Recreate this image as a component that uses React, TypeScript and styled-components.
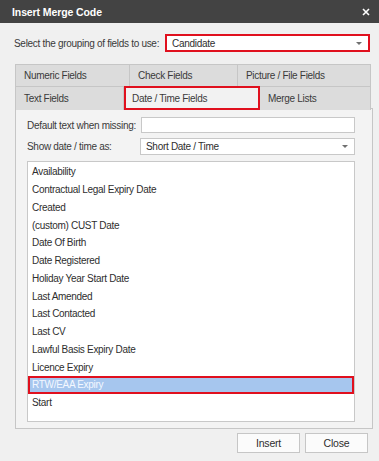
import React from 'react';
import styled, { createGlobalStyle } from 'styled-components';

const GlobalStyle = createGlobalStyle`
  html, body {
    margin: 0;
    padding: 0;
    background: #f0f0f0;
  }
`;

const Dialog = styled.div`
  width: 379px;
  height: 461px;
  background: #f0f0f0;
  display: flex;
  flex-direction: column;
  font-family: 'Liberation Sans', Arial, sans-serif;
  font-size: 10px;
  letter-spacing: -0.3px;
  color: #3a3a3a;
  box-sizing: border-box;
`;

const TitleBar = styled.div`
  height: 23px;
  background: #434343;
  display: flex;
  align-items: center;
  justify-content: space-between;
  padding: 0 9px 0 12px;
  flex-shrink: 0;
`;

const Title = styled.span`
  color: #ffffff;
  font-weight: 700;
  font-size: 10.5px;
  letter-spacing: -0.1px;
`;

const CloseIcon = styled.svg`
  width: 8px;
  height: 8px;
`;

const Body = styled.div`
  display: flex;
  flex-direction: column;
  padding: 11px 8px 0 14px;
`;

const Row = styled.div<{ $gap?: number }>`
  display: flex;
  align-items: center;
  gap: ${p => p.$gap ?? 8}px;
`;

const Label = styled.span<{ $width?: number }>`
  white-space: nowrap;
  ${p => (p.$width ? `width: ${p.$width}px; flex-shrink: 0;` : '')}
`;

const SelectBox = styled.div<{ $highlight?: boolean; $width: number }>`
  width: ${p => p.$width}px;
  height: ${p => (p.$highlight ? 18 : 17)}px;
  box-sizing: border-box;
  background: #ffffff;
  border: ${p => (p.$highlight ? '2px solid #e0101e' : '1px solid #c8c8c8')};
  display: flex;
  align-items: center;
  justify-content: space-between;
  padding: 0 6px 0 5px;
  color: #2e2e2e;
`;

const Caret = styled.span`
  width: 0;
  height: 0;
  border-left: 3px solid transparent;
  border-right: 3px solid transparent;
  border-top: 3px solid #707070;
`;

const TabArea = styled.div`
  margin-top: 12px;
  margin-left: 1px;
  display: flex;
  flex-direction: column;
`;

const TabRow = styled.div<{ $cols: string }>`
  display: grid;
  grid-template-columns: ${p => p.$cols};
  width: 356px;
  height: 22px;
`;

const Tab = styled.div<{ $active?: boolean }>`
  box-sizing: border-box;
  background: ${p => (p.$active ? '#f2f2f2' : '#dcdcdc')};
  border: 1px solid #c6c6c6;
  border-left-width: 0;
  border-bottom-width: 0;
  display: flex;
  align-items: center;
  padding-left: 8px;
  color: #3a3a3a;
  position: relative;
  &:first-child {
    border-left-width: 1px;
  }
  ${p =>
    p.$active
      ? `
    outline: 2px solid #e0101e;
    outline-offset: -2px;
    height: 24px;
    z-index: 1;
  `
      : ''}
`;

const Panel = styled.div`
  width: 358px;
  height: 321px;
  box-sizing: border-box;
  border: 1px solid #c6c6c6;
  background: #f3f3f3;
  display: flex;
  flex-direction: column;
  padding: 8px 17px 0 11px;
  gap: 5px;
`;

const TextInput = styled.div`
  width: 215px;
  height: 16px;
  box-sizing: border-box;
  background: #ffffff;
  border: 1px solid #c8c8c8;
`;

const List = styled.div`
  margin-top: 1px;
  height: 261px;
  box-sizing: border-box;
  background: #ffffff;
  border: 1px solid #c8c8c8;
  padding-top: 1px;
  display: flex;
  flex-direction: column;
`;

const Item = styled.div<{ $selected?: boolean }>`
  height: 17.75px;
  flex-shrink: 0;
  box-sizing: border-box;
  display: flex;
  align-items: center;
  color: ${p => (p.$selected ? '#f4f8ff' : '#2e2e2e')};
  background: ${p => (p.$selected ? '#a6c6ee' : 'transparent')};
  border: ${p => (p.$selected ? '2px solid #e0101e' : 'none')};
  padding-left: ${p => (p.$selected ? 2 : 4)}px;
`;

const Footer = styled.div`
  display: flex;
  justify-content: flex-end;
  gap: 5px;
  padding: 4px 11px 0 0;
`;

const Button = styled.button`
  width: 63px;
  height: 20px;
  box-sizing: border-box;
  background: #fbfbfb;
  border: 1px solid #c6c6c6;
  font-family: inherit;
  font-size: 10.5px;
  letter-spacing: -0.2px;
  color: #2e2e2e;
  padding: 0;
`;

const items = [
  'Availability',
  'Contractual Legal Expiry Date',
  'Created',
  '(custom) CUST Date',
  'Date Of Birth',
  'Date Registered',
  'Holiday Year Start Date',
  'Last Amended',
  'Last Contacted',
  'Last CV',
  'Lawful Basis Expiry Date',
  'Licence Expiry',
  'RTW/EAA Expiry',
  'Start',
];

export default function App() {
  return (
    <>
      <GlobalStyle />
      <Dialog>
        <TitleBar>
          <Title>Insert Merge Code</Title>
          <CloseIcon viewBox="0 0 8 8">
            <path d="M1 1L7 7M7 1L1 7" stroke="#ffffff" strokeWidth="1.6" />
          </CloseIcon>
        </TitleBar>
        <Body>
          <Row $gap={0}>
            <Label $width={151}>Select the grouping of fields to use:</Label>
            <SelectBox $highlight $width={205}>
              Candidate
              <Caret />
            </SelectBox>
          </Row>
          <TabArea>
            <TabRow $cols="115px 108px 133px">
              <Tab>Numeric Fields</Tab>
              <Tab>Check Fields</Tab>
              <Tab>Picture / File Fields</Tab>
            </TabRow>
            <TabRow $cols="109px 136px 111px">
              <Tab>Text Fields</Tab>
              <Tab $active>Date / Time Fields</Tab>
              <Tab>Merge Lists</Tab>
            </TabRow>
            <Panel>
              <Row $gap={0}>
                <Label $width={114}>Default text when missing:</Label>
                <TextInput />
              </Row>
              <Row $gap={0}>
                <Label $width={113}>Show date / time as:</Label>
                <SelectBox $width={215}>
                  Short Date / Time
                  <Caret />
                </SelectBox>
              </Row>
              <List>
                {items.map(it => (
                  <Item key={it} $selected={it === 'RTW/EAA Expiry'}>
                    {it}
                  </Item>
                ))}
              </List>
            </Panel>
          </TabArea>
        </Body>
        <Footer>
          <Button>Insert</Button>
          <Button>Close</Button>
        </Footer>
      </Dialog>
    </>
  );
}
